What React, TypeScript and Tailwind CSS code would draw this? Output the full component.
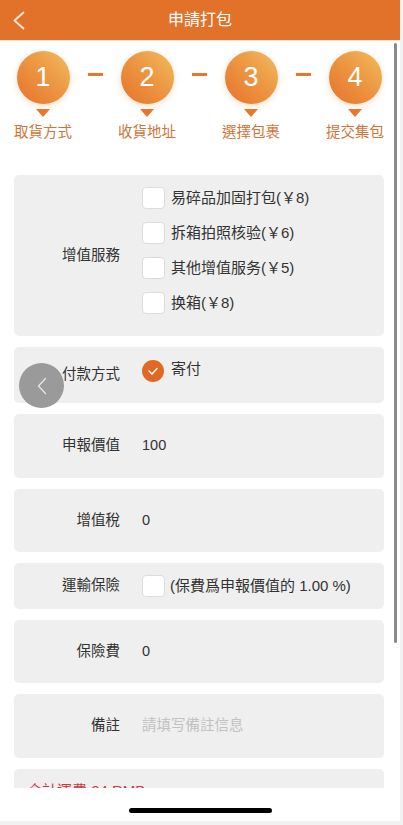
import React from "react";

const FONT = { fontFamily: '"Liberation Sans", "Noto Sans CJK TC", "Noto Sans CJK SC", sans-serif' };

function Step({ n, label }: { n: string; label: string }) {
  return (
    <div className="flex w-[60px] flex-col items-center">
      <div className="flex h-[53px] w-[53px] items-center justify-center rounded-full bg-linear-to-tr from-[#e6722a] via-[#ec9440] to-[#f3bb5e] text-[27px] leading-none text-white shadow-[0_2px_6px_rgba(230,120,40,0.25)]">
        {n}
      </div>
      <div className="mt-[5px] h-0 w-0 border-l-[7px] border-r-[7px] border-t-[8px] border-l-transparent border-r-transparent border-t-[#e8772b]" />
      <div className="mt-[5px] whitespace-nowrap text-[14.5px] leading-[20px] text-[#cf7437]">{label}</div>
    </div>
  );
}

function Dash() {
  return (
    <div className="flex w-[44px] justify-center pt-[22px]">
      <div className="h-[3px] w-[15px] bg-[#e8772b]" />
    </div>
  );
}

function Checkbox() {
  return <div className="h-[22px] w-[23px] shrink-0 rounded-[4px] border border-[#dcdcdc] bg-white" />;
}

function Card({ label, children, h, top }: { label: string; children: React.ReactNode; h?: string; top?: boolean }) {
  return (
    <div className={`flex rounded-[5px] bg-[#efefef] ${h ?? ""}`}>
      <div className="flex w-[106px] shrink-0 items-center justify-end text-[14.5px] text-[#333]">{label}</div>
      <div className={`ml-[22px] flex flex-1 ${top ? "items-start" : "items-center"}`}>{children}</div>
    </div>
  );
}

export default function App() {
  return (
    <div className="h-[825px] w-[403px] overflow-hidden bg-[#f2f2f2]" style={FONT}>
      <div className="relative flex h-[821px] w-[400px] flex-col bg-white">
        {/* Header */}
        <div className="relative flex h-[40px] shrink-0 items-center justify-center bg-[#e2712a]">
          <svg className="absolute left-[12px] top-[11px]" width="14" height="19" viewBox="0 0 14 19">
            <polyline points="11.5,1.5 2.5,9.5 11.5,17.5" fill="none" stroke="#fbeee2" strokeWidth="1.8" strokeLinecap="round" strokeLinejoin="round" />
          </svg>
          <span className="text-[16px] text-white">申請打包</span>
        </div>

        {/* Content */}
        <div className="flex-1 overflow-hidden">
          <div className="h-[1px] bg-[#f4dfca]" />
          <div className="flex pl-[13px] pt-[10px]">
            <Step n="1" label="取貨方式" />
            <Dash />
            <Step n="2" label="收貨地址" />
            <Dash />
            <Step n="3" label="選擇包裹" />
            <Dash />
            <Step n="4" label="提交集包" />
          </div>

          <div className="ml-[14px] mt-[33px] flex w-[370px] flex-col gap-[11px]">
            <Card label="增值服務">
              <div className="flex flex-col gap-[13px] pb-[22px] pt-[12px] text-[15px] text-[#333]">
                {["易碎品加固打包(￥8)", "拆箱拍照核验(￥6)", "其他增值服务(￥5)", "换箱(￥8)"].map((t) => (
                  <div key={t} className="flex items-center gap-[6px]">
                    <Checkbox />
                    <span className="leading-[22px]">{t}</span>
                  </div>
                ))}
              </div>
            </Card>

            <Card label="付款方式" h="h-[56px]" top>
              <div className="flex items-center gap-[7px] pt-[13px]">
                <div className="flex h-[22px] w-[22px] items-center justify-center rounded-full bg-[#e06a25]">
                  <svg width="12" height="10" viewBox="0 0 12 10">
                    <polyline points="2,5 5,8 10,2.5" fill="none" stroke="white" strokeWidth="1.4" strokeLinecap="round" strokeLinejoin="round" />
                  </svg>
                </div>
                <span className="-mt-[3px] text-[15px] text-[#333]">寄付</span>
              </div>
            </Card>

            <Card label="申報價值" h="h-[64px]">
              <span className="text-[14.5px] text-[#333]">100</span>
            </Card>

            <Card label="增值稅" h="h-[63px]">
              <span className="text-[14.5px] text-[#333]">0</span>
            </Card>

            <Card label="運輸保險" h="h-[46px]">
              <div className="flex items-center gap-[5px] text-[15px] text-[#333]">
                <Checkbox />
                <span>(保費爲申報價值的 1.00 %)</span>
              </div>
            </Card>

            <Card label="保險費" h="h-[63px]">
              <span className="text-[14.5px] text-[#333]">0</span>
            </Card>

            <Card label="備註" h="h-[64px]">
              <span className="text-[14.5px] text-[#c2c2c2]">請填写備註信息</span>
            </Card>

            <div className="h-[60px] rounded-[5px] bg-[#efefef] pl-[13px] pt-[10px]">
              <span className="text-[15px] text-[#d8343a]">合計運費 24 RMB</span>
            </div>
          </div>
        </div>

        {/* Bottom home indicator area */}
        <div className="flex h-[33px] shrink-0 justify-center bg-white pt-[20px]">
          <div className="h-[5px] w-[143px] rounded-full bg-black" />
        </div>

        {/* Scrollbar */}
        <div className="absolute left-[394px] top-[43px] h-[600px] w-[3px] rounded-full bg-[#8a8a8a]" />

        {/* Floating back button */}
        <div className="absolute left-[19px] top-[363px] flex h-[45px] w-[45px] items-center justify-center rounded-full bg-[#9a9a9a]">
          <svg width="12" height="18" viewBox="0 0 12 18">
            <polyline points="9.5,1.5 2.5,9 9.5,16.5" fill="none" stroke="#e6e6e6" strokeWidth="1.3" strokeLinecap="round" strokeLinejoin="round" />
          </svg>
        </div>
      </div>
    </div>
  );
}
